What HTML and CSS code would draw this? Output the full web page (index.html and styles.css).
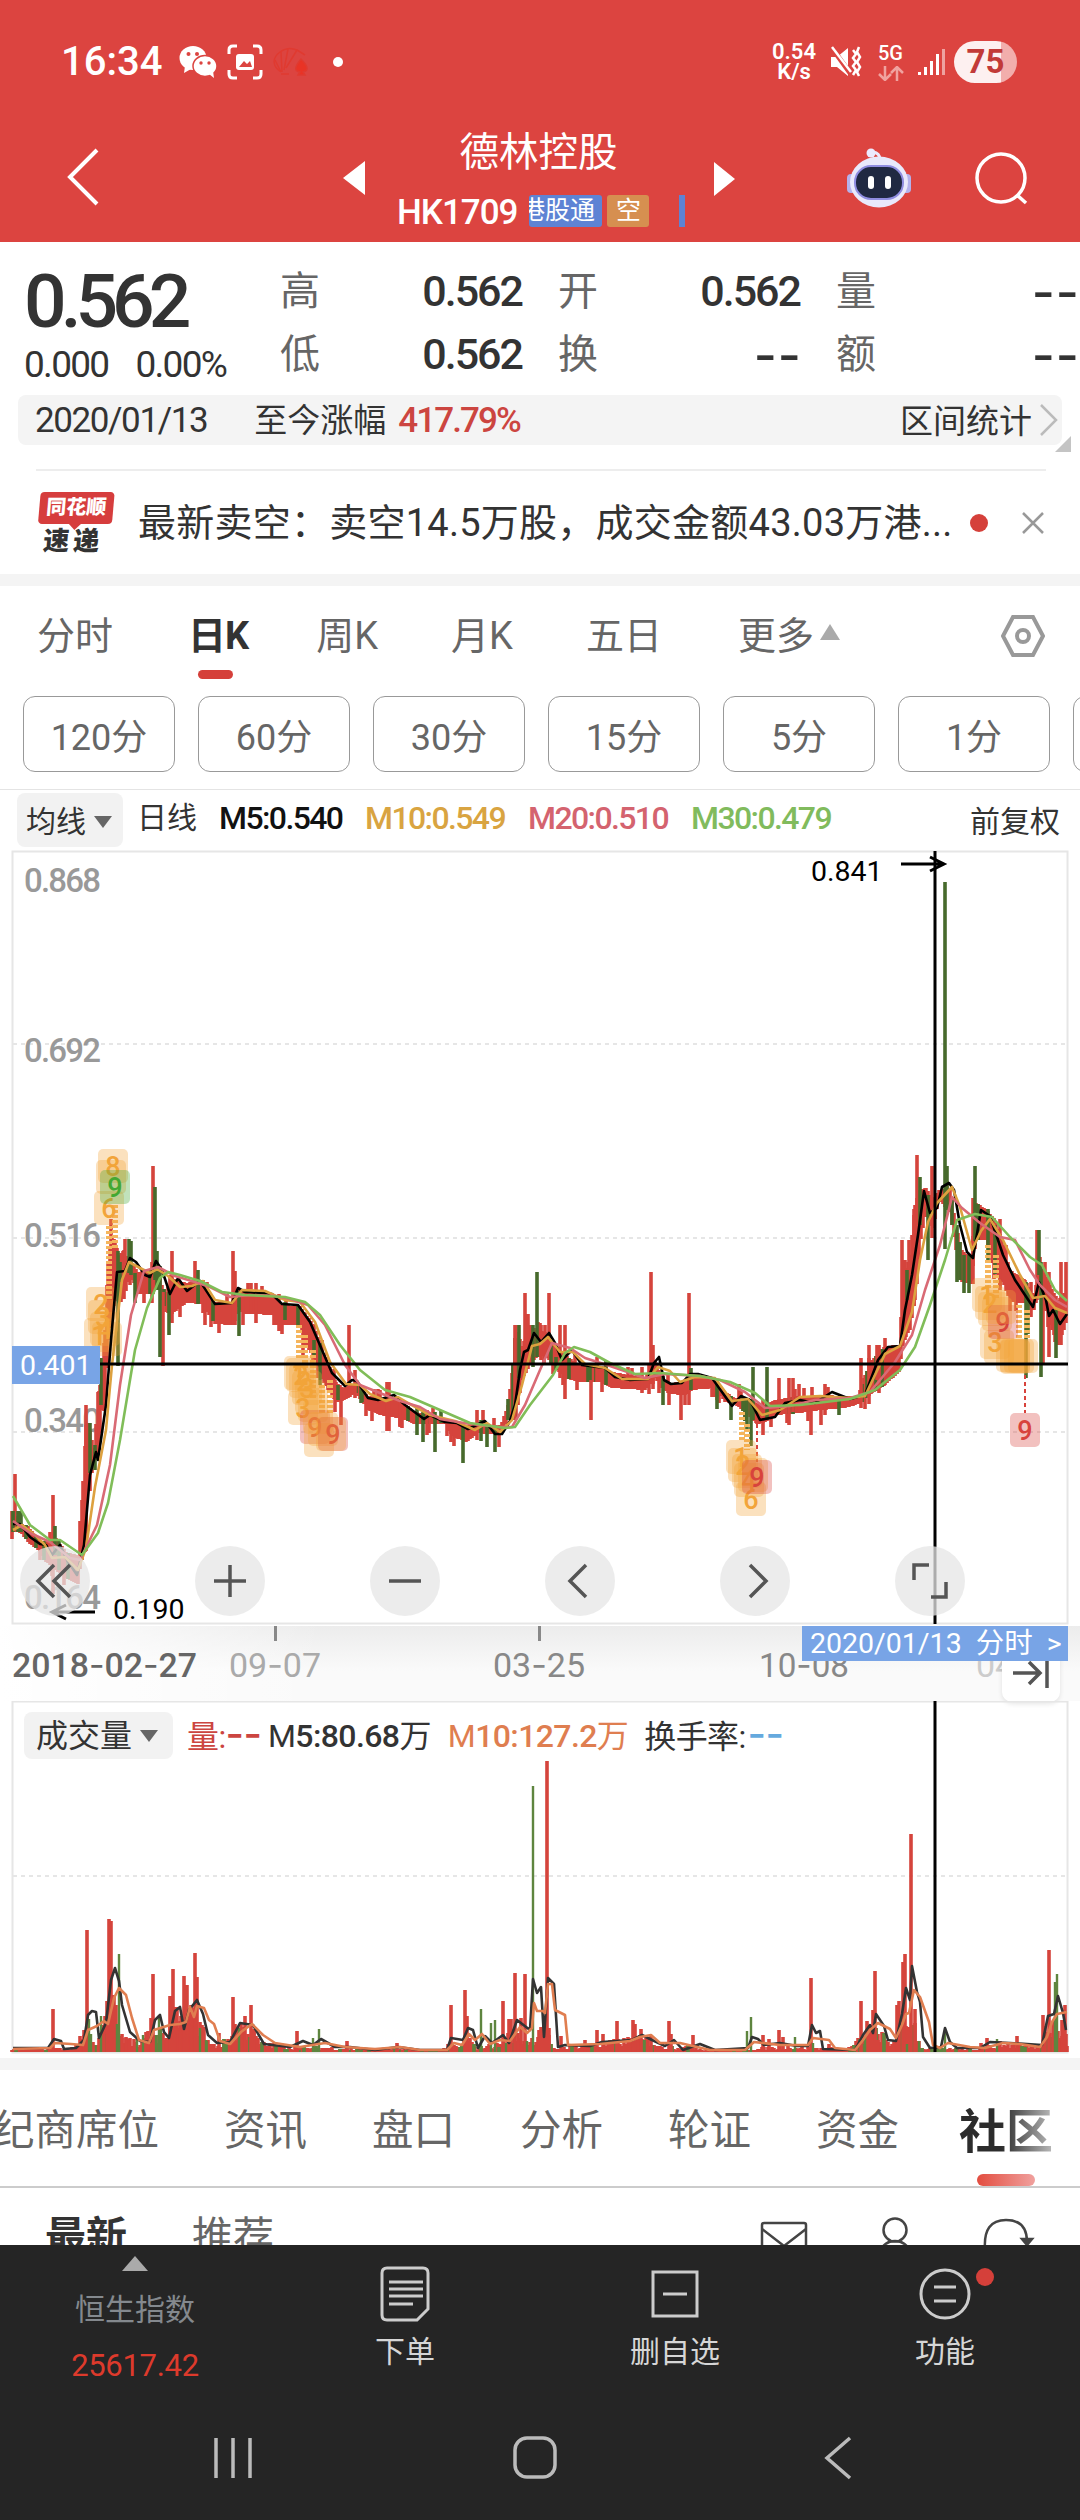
FILE: index.html
```html
<!DOCTYPE html>
<html lang="zh-CN">
<head>
    <meta charset="UTF-8">
    <meta name="viewport" content="width=device-width, initial-scale=1.0">
    <title>德林控股 HK1709</title>
    <link rel="stylesheet" href="styles.css">
</head>
<body>
    <header>
        <div class="status">
            <span class="clock">16:34</span>
            <svg class="st-wechat" width="38" height="34" viewBox="0 0 38 34">
                <ellipse cx="14" cy="13" rx="13.5" ry="12" fill="#fff"/>
                <path d="M6 21l-1 7 7-4z" fill="#fff"/>
                <circle cx="9.500" cy="9" r="2" fill="#dc4440"/><circle cx="18" cy="9" r="2" fill="#dc4440"/>
                <ellipse cx="26" cy="21" rx="12" ry="10.500" fill="#fff" stroke="#dc4440" stroke-width="1.500"/>
                <path d="M30 29l5 4-1-7z" fill="#fff"/>
                <circle cx="22" cy="18" r="1.700" fill="#dc4440"/><circle cx="30" cy="18" r="1.700" fill="#dc4440"/>
            </svg>
            <svg class="st-scan" width="36" height="36" viewBox="0 0 36 36" fill="none" stroke="#fff" stroke-width="3">
                <path d="M2 10V6q0-4 4-4h4M26 2h4q4 0 4 4v4M34 26v4q0 4-4 4h-4M10 34H6q-4 0-4-4v-4"/>
                <rect x="9" y="10" width="18" height="16" rx="3" fill="#fff" stroke="none"/>
                <path d="M12 23l5-6 3 3 3-3 2 6z" fill="#dc4440" stroke="none"/>
            </svg>
            <svg class="st-app" width="36" height="32" viewBox="0 0 36 32" fill="none" stroke="#e03a30" stroke-width="1.500">
                <path d="M8 26C-1 20-1 12 7 6q8-6 17-2l8 5M8 26L2 14M9 26l-1-20M11 24l4-21M13 22L24 4M8 28h8"/>
                <path d="M28 13q11 11 2 13l2 3h-7l2-3q-9-1 1-13z" fill="#e93325"/>
            </svg>
            <i class="st-dot"></i>
            <span class="speed">0.54<br>K/s</span>
            <svg class="st-mute" width="32" height="32" viewBox="0 0 32 32" fill="none" stroke="#fff">
                <path d="M1 11h6l11-9v28L7 21H1z" fill="#fff" stroke="none"/>
                <path d="M2 2l18 25" stroke="#dc4440" stroke-width="5"/><path d="M2 1l19 25" stroke-width="2.500"/>
                <path d="M23 4l3 4-3 4 3 4-3 4 3 4-3 5M29 1l-2 5 3 5-3 5 3 5-3 5 2 4" stroke-width="2.500"/>
            </svg>
            <span class="net">5G<svg width="26" height="15" viewBox="0 0 26 15" fill="none" stroke="#f0a29f" stroke-width="2.500"><path d="M7 0v13M1 8l6 6 6-6M19 15V2M13 7l6-6 6 6"/></svg></span>
            <svg class="st-signal" width="28" height="28" viewBox="0 0 28 28" fill="#fff">
                <path d="M0 24h3v3H0zM6 19h3v8H6zM12 13h3v14h-3zM18 6h3v21h-3z"/><path d="M24 1h3v26h-3z" opacity=".5"/>
            </svg>
            <span class="battery">75</span>
        </div>
        <div class="title-row">
            <svg class="back" width="34" height="58" viewBox="0 0 34 58"><path d="M31 2L4 29l27 27" fill="none" stroke="#fff" stroke-width="4"/></svg>
            <svg class="prev" width="22" height="34" viewBox="0 0 22 34"><path d="M22 0v34L0 17z" fill="#fff"/></svg>
            <div class="stock">
                <h1>德林控股</h1>
                <div class="code">
                    <b>HK1709</b>
                    <span class="tag blue"><span>港股通</span></span>
                    <span class="tag orange">空</span>
                    <i class="sliver"></i>
                </div>
            </div>
            <svg class="next" width="21" height="34" viewBox="0 0 21 34"><path d="M0 0v34l21-17z" fill="#fff"/></svg>
            <svg class="robot" width="66" height="60" viewBox="0 0 66 60">
                <path d="M34 12Q34 5 27 4" fill="none" stroke="#eceaff" stroke-width="3"/><circle cx="25" cy="5" r="4.500" fill="#eceaff"/>
                <rect x="1" y="26" width="9" height="19" rx="4" fill="#b4b2ec"/><rect x="56" y="26" width="9" height="19" rx="4" fill="#b4b2ec"/>
                <ellipse cx="33" cy="34" rx="29" ry="25.500" fill="#e9e9fb"/>
                <rect x="9" y="18" width="48" height="33" rx="16" fill="#202942" stroke="#8f8de0" stroke-width="2"/>
                <rect x="22" y="28" width="6" height="13" rx="3" fill="#fff"/><rect x="39" y="28" width="6" height="13" rx="3" fill="#fff"/>
            </svg>
            <svg class="search" width="56" height="56" viewBox="0 0 56 56" fill="none" stroke="#fff" stroke-width="3.500"><circle cx="27" cy="27" r="24"/><path d="M43 44l9 8"/></svg>
        </div>
    </header>

    <section class="quote">
        <div class="price">
            <strong>0.562</strong>
            <p><span>0.000</span><span>0.00%</span></p>
        </div>
        <dl>
            <div><dt>高</dt><dd>0.562</dd></div>
            <div><dt>开</dt><dd>0.562</dd></div>
            <div><dt>量</dt><dd class="dash">--</dd></div>
            <div><dt>低</dt><dd>0.562</dd></div>
            <div><dt>换</dt><dd class="dash">--</dd></div>
            <div><dt>额</dt><dd class="dash">--</dd></div>
        </dl>
    </section>
    <div class="range">
        <span class="num">2020/01/13</span>
        <span class="since">至今涨幅</span>
        <b>417.79%</b>
        <span class="stat">区间统计</span>
        <svg width="20" height="34" viewBox="0 0 20 34"><path d="M2 2l15 15L2 32" fill="none" stroke="#bbb" stroke-width="2.500"/></svg>
        <i class="corner"></i>
    </div>

    <div class="news">
        <div class="news-logo"><span>同花顺</span><em>速递</em></div>
        <p>最新卖空：卖空14.5万股，成交金额43.03万港...</p>
        <i class="red-dot"></i>
        <svg width="22" height="22" viewBox="0 0 22 22"><path d="M1 1l20 20M21 1L1 21" stroke="#999" stroke-width="2.500"/></svg>
    </div>

    <nav class="periods">
        <a>分时</a><a class="on">日K</a><a>周K</a><a>月K</a><a>五日</a><a class="more">更多</a>
        <svg width="44" height="42" viewBox="0 0 44 42" fill="none" stroke="#999" stroke-width="4"><path d="M12 2h20l10 19-10 19H12L2 21z"/><circle cx="22" cy="21" r="6"/></svg>
    </nav>
    <div class="minutes">
        <span>120分</span><span>60分</span><span>30分</span><span>15分</span><span>5分</span><span>1分</span><span></span>
    </div>

    <div class="ma">
        <span class="pick">均线</span>
        <span class="day">日线</span>
        <b>M5:0.540</b><b class="m10">M10:0.549</b><b class="m20">M20:0.510</b><b class="m30">M30:0.479</b>
        <span class="adjust">前复权</span>
    </div>

    <div class="kline">
        <svg id="kline" width="1080" height="776" viewBox="0 850 1080 776">
            <g class="grid">
                <path d="M13 1044H1068M13 1238H1068M13 1432H1068" stroke-dasharray="4 4"/>
                <rect x="12.500" y="851.500" width="1055" height="772"/>
            </g>
            <g class="axis">
                <text x="24" y="892" textLength="77">0.868</text>
                <text x="24" y="1062" textLength="77">0.692</text>
                <text x="24" y="1247" textLength="77">0.516</text>
                <text x="24" y="1432" textLength="77">0.340</text>
                <text x="24" y="1609" textLength="77">0.164</text>
            </g>
            <g id="candles"></g>
            <g id="badges"></g>
            <g id="averages"></g>
            <path class="cross" d="M12 1364H1068M935 851V1624"/>
            <rect x="12" y="1346" width="88" height="38" fill="#78a4e6"/>
            <text class="mark" x="20" y="1375" fill="#fff">0.401</text>
            <text class="mark" x="811" y="881">0.841</text>
            <text class="mark" x="113" y="1619">0.190</text>
            <path class="arrow" d="M901 864H944M930 857l14 7-14 7M95 1612H52M66 1605l-14 7 14 7"/>
        </svg>
        <div class="tools">
            <button><svg viewBox="0 0 70 70"><path d="M34 19L18 35l16 16M50 19L34 35l16 16"/></svg></button>
            <button><svg viewBox="0 0 70 70"><path d="M19 35h32M35 19v32"/></svg></button>
            <button><svg viewBox="0 0 70 70"><path d="M19 35h32"/></svg></button>
            <button><svg viewBox="0 0 70 70"><path d="M41 19L25 35l16 16"/></svg></button>
            <button><svg viewBox="0 0 70 70"><path d="M30 19l16 16-16 16"/></svg></button>
            <button><svg viewBox="0 0 70 70"><path d="M19 34V19h15M51 36v15H36"/></svg></button>
        </div>
    </div>

    <div class="dates">
        <svg width="1080" height="75" viewBox="0 0 1080 75">
            <path d="M275.500 0v15M539.500 0v15M803.500 0v15" stroke="#888" stroke-width="3"/>
            <g class="axis">
                <text class="first" x="12" y="51" textLength="185" lengthAdjust="spacingAndGlyphs">2018<tspan class="dash">-</tspan>02<tspan class="dash">-</tspan>27</text>
                <text x="229" y="51" textLength="92" lengthAdjust="spacingAndGlyphs" fill="#aaa">09<tspan class="dash">-</tspan>07</text>
                <text x="493" y="51" textLength="92" lengthAdjust="spacingAndGlyphs">03<tspan class="dash">-</tspan>25</text>
                <text x="759" y="51" textLength="90" lengthAdjust="spacingAndGlyphs">10<tspan class="dash">-</tspan>08</text>
                <text class="faint" x="976" y="51">04</text>
            </g>
        </svg>
        <span class="end"><svg width="38" height="30" viewBox="0 0 38 30" fill="none" stroke="#555" stroke-width="3.500"><path d="M0 15h26M16 4l11 11-11 11M34 0v30"/></svg></span>
        <span class="cursor-date">2020/01/13<span>分时</span><span>&gt;</span></span>
    </div>

    <div class="volume">
        <svg id="volume" width="1080" height="357" viewBox="0 1701 1080 357">
            <g class="grid">
                <path d="M13 1876H1068" stroke-dasharray="4 4"/>
                <rect x="12.500" y="1701.500" width="1055" height="351"/>
            </g>
            <g id="volumeBars"></g>
            <g id="volumeLines"></g>
            <path class="cross" d="M935 1701V2052"/>
        </svg>
        <div class="vol-head">
            <span class="pick">成交量</span>
            <span class="v-red">量:<i class="dash">--</i></span>
            <span>M<b>5:80.68</b>万</span>
            <span class="v-orange">M<b>10:127.2</b>万</span>
            <span class="turn">换手率:<i class="dash">--</i></span>
        </div>
    </div>

    <nav class="sections">
        <a>经纪商席位</a><a>资讯</a><a>盘口</a><a>分析</a><a>轮证</a><a>资金</a><a class="on">社区</a>
    </nav>
    <div class="feed">
        <b>最新</b><span>推荐</span>
        <svg width="310" height="40" viewBox="0 0 310 40" fill="none" stroke="#444" stroke-width="2.500">
            <rect x="2" y="6" width="44" height="34" rx="2"/><path d="M2 12l22 17 22-17"/>
            <circle cx="135" cy="13" r="11.500"/><path d="M118 40q4-16 17-16t17 16"/>
            <path d="M225 32q-2-29 21-29 21 0 21 22"/><path d="M262 22h10l-5 6z" fill="#444"/>
        </svg>
    </div>

    <footer>
        <div class="actions">
            <div class="index"><i></i><span>恒生指数</span><b>25617.42</b></div>
            <div>
                <svg width="50" height="56" viewBox="0 0 50 56"><path d="M7 2h36q5 0 5 5v36L37 54H7q-5 0-5-5V7q0-5 5-5zM9 16h34M9 23h34M9 30h34M9 38h24"/></svg>
                <span>下单</span>
            </div>
            <div>
                <svg width="50" height="56" viewBox="0 0 50 56"><path d="M3 6h44v44H3zM13 28h24"/></svg>
                <span>删自选</span>
            </div>
            <div class="fn">
                <svg width="52" height="56" viewBox="0 0 52 56"><circle cx="26" cy="28" r="24"/><path d="M15 21h22M15 35h22"/></svg>
                <span>功能</span>
            </div>
        </div>
        <svg class="sysnav" width="1080" height="60" viewBox="0 0 1080 60" fill="none" stroke="#bbb" stroke-width="3.500">
            <path d="M216 10v40M233 10v40M250 10v40"/>
            <rect x="515" y="10" width="40" height="39" rx="12"/>
            <path d="M850 10l-23 20 23 20"/>
        </svg>
    </footer>
    <script src="chart.js"></script>
</body>
</html>
```

FILE: styles.css
```css
* {
    box-sizing: border-box;
}

body {
    margin: 0;
    width: 1080px;
    height: 2520px;
    overflow: hidden;
    background: #fff;
    color: #333;
    font-family: Roboto, "Noto Sans CJK SC", sans-serif;
    font-size: 38px;
    line-height: 1;
}

svg {
    display: block;
    flex: none;
}

h1, p, dl, dd {
    margin: 0;
}

i, em {
    font-style: normal;
}

a, span, b, dt, dd {
    white-space: nowrap;
}

.dash {
    font-family: Inter, sans-serif;
    font-weight: 500;
}

/* cabeçalho */
header {
    height: 242px;
    background: #dc4440;
    color: #fff;
}

.status {
    display: flex;
    align-items: center;
    height: 123px;
    padding-left: 61px;
}

.clock {
    width: 118px;
    font-size: 40px;
    font-weight: 500;
}

.st-scan {
    margin-left: 10px;
}

.st-app {
    margin-left: 10px;
}

.st-dot {
    width: 10px;
    height: 10px;
    margin-left: 24px;
    border-radius: 50%;
    background: #fff;
}

.speed {
    width: 46px;
    margin-left: 428px;
    font-size: 22px;
    font-weight: 600;
    line-height: 20px;
    text-align: center;
}

.st-mute {
    margin-left: 13px;
}

.net {
    width: 26px;
    margin-left: 16px;
    font-size: 20px;
    font-weight: 500;
}

.net svg {
    margin-top: 3px;
}

.st-signal {
    margin-left: 14px;
}

.battery {
    width: 63px;
    height: 42px;
    margin-left: 8px;
    border-radius: 21px;
    background: linear-gradient(90deg, #fdf0f0 75%, #f2aeac 75%);
    color: #c23a38;
    font-size: 33px;
    font-weight: 700;
    line-height: 42px;
    text-align: center;
}

.title-row {
    display: flex;
    height: 119px;
    padding-left: 66px;
}

.back {
    margin-top: 25px;
}

.prev {
    margin: 38px 0 0 243px;
}

.stock {
    width: 349px;
    padding: 8px 0 0 32px;
}

h1 {
    width: 283px;
    font-size: 39.500px;
    font-weight: 400;
    text-align: center;
    line-height: 44px;
}

.code {
    display: flex;
    align-items: center;
    height: 32px;
    margin-top: 20px;
}

.code b {
    width: 132px;
    padding-top: 2px;
    font-size: 35px;
    font-weight: 500;
    letter-spacing: -1px;
}

.tag {
    display: flex;
    justify-content: flex-end;
    height: 32px;
    overflow: hidden;
    border-radius: 3px;
    font-size: 25px;
    line-height: 31px;
}

.tag.blue {
    width: 73px;
    padding-right: 7px;
    background: #5e83d4;
}

.tag.orange {
    width: 42px;
    margin-left: 5px;
    padding-right: 8px;
    background: #d68f50;
}

.sliver {
    width: 6px;
    height: 32px;
    margin-left: 30px;
    background: #5e83d4;
}

.next {
    margin-top: 39px;
}

.robot {
    margin: 25px 0 0 111px;
}

.search {
    margin: 28px 0 0 62px;
}

/* cotação */
.quote {
    display: flex;
    height: 153px;
    padding-left: 24px;
}

.price {
    width: 256px;
    padding-top: 20px;
}

.price strong {
    display: block;
    height: 79px;
    font-size: 75px;
    font-weight: 500;
    letter-spacing: -6px;
    line-height: 79px;
}

.price p {
    display: flex;
    gap: 27px;
    margin-top: 5px;
    font-size: 37px;
    letter-spacing: -1.700px;
}

.quote dl {
    display: grid;
    grid-template-columns: 242px 242px 242px;
    grid-template-rows: 63px 63px;
    column-gap: 36px;
    padding-top: 18px;
}

.quote dl div {
    display: flex;
    justify-content: space-between;
    align-items: center;
}

.quote dt {
    color: #666;
    font-size: 40px;
}

.quote dd {
    font-size: 43px;
    font-weight: 500;
    letter-spacing: -2px;
}

.quote dd.dash {
    font-size: 50px;
    letter-spacing: 1px;
    margin-right: -2px;
}

.range {
    position: relative;
    display: flex;
    align-items: center;
    height: 50px;
    margin: 0 18px;
    padding: 0 3px 0 17px;
    border-radius: 8px;
    background: #f4f4f4;
    font-size: 33px;
}

.num {
    font-size: 35px;
    letter-spacing: -1.400px;
}

.since {
    margin-left: 47px;
}

.range b {
    margin-left: 12px;
    color: #cc4540;
    font-size: 35px;
    font-weight: 500;
    letter-spacing: -1.900px;
}

.stat {
    margin: 3px 7px 0 auto;
}

.corner {
    position: absolute;
    right: -9px;
    bottom: -7px;
    border: 8px solid transparent;
    border-right-color: #c4c4c4;
    border-bottom-color: #c4c4c4;
}

.news {
    display: flex;
    align-items: center;
    height: 105px;
    margin: 24px 34px 0 36px;
    border-top: 2px solid #ededed;
}

.news-logo {
    position: relative;
    width: 74px;
    margin: 0 26px 0 2px;
    transform: skewX(-5deg);
}

.news-logo span {
    display: block;
    height: 32px;
    border-radius: 4px;
    background: #d63d3d;
    color: #fff;
    font-size: 20px;
    font-weight: 900;
    line-height: 31px;
    text-align: center;
}

.news-logo::after {
    content: "";
    position: absolute;
    left: 31px;
    top: 32px;
    border: 6px solid transparent;
    border-bottom: 0;
    border-top-color: #d63d3d;
}

.news-logo em {
    display: block;
    margin-top: 4px;
    font-size: 26px;
    font-weight: 900;
    letter-spacing: 4px;
    text-align: center;
}

.news p {
    width: 832px;
    font-size: 38px;
    letter-spacing: .25px;
}

.red-dot {
    width: 18px;
    height: 18px;
    margin-right: 34px;
    border-radius: 50%;
    background: #d5403a;
}

/* períodos */
.periods {
    display: flex;
    align-items: center;
    height: 122px;
    border-top: 12px solid #f4f4f4;
    padding: 0 35px 10px 37px;
    color: #666;
}

.periods a {
    position: relative;
}

.periods a:nth-child(2) { margin-left: 75px; }
.periods a:nth-child(3) { margin-left: 68px; }
.periods a:nth-child(4) { margin-left: 73px; }
.periods a:nth-child(5) { margin-left: 73px; }
.periods a:nth-child(6) { margin-left: 76px; }

.periods svg {
    margin-left: auto;
}

.periods .on {
    color: #333;
    font-weight: 700;
    letter-spacing: -1px;
}

.periods .on::after {
    content: "";
    position: absolute;
    left: 10px;
    top: 53px;
    width: 35px;
    height: 9px;
    border-radius: 5px;
    background: #d5403a;
}

.more::after {
    content: "";
    display: inline-block;
    margin: 0 0 9px 6px;
    border: 10px solid transparent;
    border-top: 0;
    border-bottom: 16px solid #aaa;
}

.minutes {
    display: flex;
    gap: 23px;
    height: 94px;
    padding-left: 23px;
    overflow: hidden;
    border-bottom: 1px solid #e4e4e4;
}

.minutes span {
    flex: none;
    width: 152px;
    height: 76px;
    border: 1.500px solid #999;
    border-radius: 12px;
    color: #666;
    font-size: 36px;
    line-height: 82px;
    text-align: center;
}

.ma {
    display: flex;
    align-items: center;
    height: 60px;
    padding: 0 20px 0 17px;
    font-size: 30px;
}

.pick {
    display: flex;
    align-items: center;
    background: #f2f2f2;
    border-radius: 8px;
}

.pick::after {
    content: "";
    border: 9px solid transparent;
    border-bottom: 0;
    border-top: 12px solid #666;
    margin-left: 8px;
}

.ma .pick {
    width: 106px;
    height: 54px;
    padding: 4px 0 0 9px;
    font-size: 30px;
}

.day {
    width: 82px;
    margin: -5px 0 0 14px;
    font-size: 30px;
}

.ma b {
    margin: -5px 0 0;
    width: 146px;
    color: #111;
    font-size: 32px;
    font-weight: 500;
    letter-spacing: -1.600px;
}

.ma b.m10 { width: 163px; color: #d9a441; }
.ma b.m20 { width: 163px; color: #d4636f; }
.ma b.m30 { color: #81bb5d; }

.adjust {
    margin: 4px 0 0 auto;
}

/* gráfico */
.kline {
    position: relative;
    height: 776px;
}

.grid {
    fill: none;
    stroke: #e6e6e6;
    stroke-width: 2;
}

.axis {
    font-size: 33px;
    font-weight: 500;
    fill: #999;
}

.mark {
    font-size: 28.500px;
}

.cross, .arrow {
    fill: none;
    stroke: #000;
    stroke-width: 3;
}

.red { stroke: #d5443c; }
.green { stroke: #476a2c; }

.bars {
    fill: none;
    stroke-width: 3.600;
}

.line {
    fill: none;
    stroke-width: 2.600;
    stroke-linejoin: round;
}

.tools {
    position: absolute;
    left: 20px;
    bottom: 10px;
    display: flex;
    gap: 105px;
}

.tools button {
    width: 70px;
    height: 70px;
    padding: 0;
    border: 0;
    border-radius: 50%;
    background: rgba(230, 230, 230, .75);
}

.tools path {
    fill: none;
    stroke: #555;
    stroke-width: 3.500;
}

.dates {
    position: relative;
    height: 75px;
    background: linear-gradient(90deg, #fff, rgba(255, 255, 255, 0) 30%), linear-gradient(#ececec, #fafafa 60%);
}

.dates .axis {
    fill: #888;
    font-size: 34px;
    font-weight: 400;
}

.dates .dash {
    font-weight: 400;
}

.dates .first {
    fill: #666;
    font-weight: 500;
}

.dates .faint {
    fill: #ccc;
}

.cursor-date {
    position: absolute;
    right: 12px;
    top: 0;
    display: flex;
    gap: 14px;
    width: 266px;
    height: 35px;
    padding-left: 8px;
    background: #78a4e6;
    color: #fff;
    font-size: 28.500px;
    line-height: 36px;
}

.end {
    position: absolute;
    right: 20px;
    bottom: -1px;
    width: 58px;
    height: 60px;
    padding: 16px 0 0 11px;
    border-radius: 10px;
    background: #fff;
    box-shadow: 0 2px 5px rgba(0, 0, 0, .1);
}

.volume {
    position: relative;
    height: 357px;
}

.volume > svg {
    position: absolute;
    left: 0;
    top: 0;
}

.vol-head {
    position: relative;
    display: flex;
    align-items: center;
    padding: 11px 0 0 24px;
    font-size: 32px;
    letter-spacing: -.6px;
}

.vol-head .pick {
    width: 149px;
    height: 47px;
    padding-left: 12px;
    margin-right: 14px;
    letter-spacing: 0;
}

.vol-head b {
    font-weight: 500;
}

.vol-head .dash {
    font-size: 40px;
    line-height: 32px;
}

.v-red {
    width: 81px;
    color: #cc4540;
}

.v-orange {
    margin: 0 16px 0 17px;
    color: #df7e50;
}

.turn .dash {
    color: #65a9de;
    margin-left: 2px;
}

/* seções */
.sections {
    position: relative;
    display: flex;
    justify-content: flex-end;
    align-items: center;
    height: 130px;
    padding: 6px 27px 0 0;
    gap: 65px;
    border-top: 12px solid #f4f4f4;
    border-bottom: 2px solid #ccc;
    color: #666;
    font-size: 41.500px;
}

.sections .on {
    margin-left: -5px;
    color: transparent;
    background: linear-gradient(90deg, #2c2c2c 45%, #bbb);
    background-clip: text;
    font-size: 47px;
    font-weight: 700;
}

.sections::after {
    content: "";
    position: absolute;
    right: 45px;
    bottom: 0;
    width: 58px;
    height: 12px;
    border-radius: 6px;
    background: linear-gradient(90deg, #e34d40, #f0a19e);
}

.feed {
    display: flex;
    height: 57px;
    padding: 29px 45px 0 45px;
    overflow: hidden;
    font-size: 41px;
}

.feed span {
    margin-left: 65px;
    color: #666;
}

.feed svg {
    margin: 0 -35px 0 auto;
}

footer {
    position: relative;
    height: 275px;
    background: #252525;
    color: #d6d6d6;
}

.actions {
    display: grid;
    grid-template-columns: repeat(4, 270px);
    height: 183px;
}

.actions div {
    position: relative;
    display: flex;
    flex-direction: column;
    align-items: center;
    padding-top: 21px;
    font-size: 30px;
}

.actions path, .actions circle {
    fill: none;
    stroke: #ccc;
    stroke-width: 3;
}

.actions svg + span {
    margin-top: 15px;
}

.actions .index {
    padding-top: 11px;
}

.index i {
    border: 13px solid transparent;
    border-top: 0;
    border-bottom: 15px solid #aaa;
}

.index span {
    margin-top: 24px;
    color: #84898e;
}

.index b {
    margin-top: 25px;
    color: #dd3a2c;
    font-size: 31px;
    font-weight: 400;
    letter-spacing: -.3px;
}

.fn::after {
    content: "";
    position: absolute;
    left: 166px;
    top: 23px;
    width: 18px;
    height: 18px;
    border-radius: 50%;
    background: #d5403a;
}
```

FILE: chart.js
```js
const SVG = "http://www.w3.org/2000/svg";

function add(parent, tag, attrs, text) {
    const el = document.createElementNS(SVG, tag);
    for (const k in attrs) el.setAttribute(k, attrs[k]);
    if (text) el.textContent = text;
    document.getElementById(parent).appendChild(el);
}

let seed = 7;
function rnd() {
    seed = (seed * 16807) % 2147483647;
    return seed / 2147483647;
}

function parse(s) {
    return s.trim().split(/\s+/).map(p => p.split(",").map(Number));
}

// x,top,bottom of the dense candle area
const band = parse(`12,1511,1530 22,1524,1534 28,1526,1542 40,1541,1551 44,1541,1560 56,1538,1570 66,1552,1578 78,1555,1584
80,1521,1569 83,1489,1555 86,1425,1551 88,1423,1490 94,1448,1465 98,1400,1455 102,1370,1410 105,1330,1398 108,1262,1340 112,1235,1316 115,1241,1301
119,1255,1295 124,1250,1290 128,1262,1273 134,1266,1283 138,1272,1294 153,1270,1294 158,1268,1280 162,1285,1300 166,1292,1312 172,1278,1314 186,1283,1303
203,1280,1304 207,1290,1312 215,1302,1324 233,1302,1325 236,1290,1305 244,1290,1314 258,1293,1314 277,1297,1316 280,1305,1325 300,1306,1325
305,1313,1345 314,1325,1357 320,1343,1375 328,1362,1390 336,1382,1402 344,1388,1400 356,1383,1393 368,1396,1410 384,1398,1416 400,1400,1418 415,1412,1424
445,1418,1424 452,1423,1436 466,1425,1442 478,1424,1433 500,1427,1435 508,1405,1420 513,1365,1420 516,1325,1418 522,1346,1380 530,1325,1365 536,1330,1358
545,1332,1355 555,1345,1368 565,1355,1378 580,1366,1382 600,1366,1382 612,1372,1388 645,1378,1390 655,1360,1378 662,1378,1388 670,1384,1394 685,1380,1395 692,1376,1390
715,1380,1388 725,1392,1402 735,1398,1404 748,1398,1415 757,1404,1424 765,1405,1422 775,1400,1415 800,1396,1413 820,1395,1410 845,1396,1408 858,1396,1404 865,1375,1400
872,1360,1393 885,1346,1385 899,1345,1372 904,1275,1340 910,1255,1330 915,1205,1300 919,1190,1250 926,1188,1212 933,1200,1228 939,1190,1200 950,1188,1212 956,1225,1250
962,1250,1282 971,1258,1284 976,1203,1240 986,1209,1240 994,1218,1270 1004,1245,1285 1010,1270,1302 1025,1280,1303 1034,1295,1310 1040,1265,1290 1050,1285,1325 1058,1300,1345 1066,1290,1325`);

const redSpikes = parse(`15,1474,1530 53,1495,1594 86,1405,1540 99,1391,1450 111,1219,1316 125,1239,1283 153,1166,1294 163,1292,1366 172,1251,1314 195,1261,1303 205,1284,1325
233,1251,1325 235,1271,1325 243,1290,1325 251,1283,1314 256,1283,1314 303,1313,1357 335,1380,1412 341,1390,1425 349,1325,1393 355,1370,1398 387,1382,1431 389,1382,1431 400,1400,1426 427,1410,1435 451,1423,1442 477,1410,1440 483,1410,1430
499,1425,1447 515,1325,1420 525,1293,1370 528,1314,1360 541,1325,1360 545,1325,1346 549,1293,1346 560,1325,1378 565,1325,1399 591,1380,1420 597,1357,1382 651,1272,1384 653,1345,1384 669,1384,1405 681,1390,1420 685,1390,1405 689,1293,1405
642,1367,1393 739,1384,1405 763,1400,1435 779,1378,1415 789,1378,1425 793,1378,1412 799,1384,1412 811,1400,1435 821,1400,1425 825,1384,1415 861,1358,1408 869,1345,1404 877,1345,1380 879,1345,1393 902,1240,1344 905,1260,1340 909,1240,1320 914,1209,1306 917,1155,1274
932,1166,1238 973,1198,1284 1000,1219,1290 1037,1230,1300 1043,1290,1365 1045,1262,1310 1049,1272,1357 1055,1300,1342 1061,1262,1345 1066,1262,1323`);

const greenSpikes = parse(`13,1511,1532 18,1511,1532 21,1511,1532 55,1526,1555 59,1541,1570 90,1423,1473 95,1445,1470 101,1358,1405 118,1251,1366 120,1262,1282 129,1239,1273 131,1241,1275 135,1273,1303 155,1187,1280 157,1251,1290 160,1266,1357 169,1292,1335 198,1270,1303 239,1291,1336
285,1302,1320 314,1340,1357 320,1343,1385 338,1385,1400 361,1385,1403 417,1407,1435 423,1412,1442 435,1412,1452 441,1410,1423 463,1425,1463 481,1420,1441 487,1425,1447 495,1425,1452 508,1399,1420 519,1325,1378 533,1325,1367 537,1272,1357 551,1346,1365 556,1357,1370 663,1376,1405 691,1368,1390
717,1379,1409 731,1396,1420 747,1400,1431 751,1400,1446 753,1367,1420 767,1367,1420 839,1396,1415 907,1270,1300 920,1177,1225 928,1195,1260 945,882,1249 947,1166,1210 957,1225,1282 964,1255,1293 969,1255,1293 975,1166,1241 988,1209,1260 995,1225,1274 1026,1282,1378 1028,1290,1334 1039,1230,1275 1041,1262,1377 1056,1310,1358`);

function bars(list) {
    return list.map(([x, a, b]) => `M${x} ${a}V${b}`).join("");
}

const dense = [];
for (let i = 0; i < band.length - 1; i++) {
    const [x0, a0, b0] = band[i], [x1, a1, b1] = band[i + 1];
    for (let x = x0; x < x1; x += 2) {
        const t = (x - x0) / (x1 - x0);
        const top = a0 + (a1 - a0) * t - (rnd() > .93 ? 8 : 0);
        const low = b0 + (b1 - b0) * t + (rnd() > .87 ? 9 : 0);
        dense.push([x, Math.round(top), Math.round(low)]);
    }
}
add("candles", "path", {class: "bars red", d: bars(dense)});
add("candles", "path", {class: "bars green", d: bars(dense.filter(() => rnd() > .95))});
add("candles", "path", {class: "bars red", d: bars(redSpikes)});
add("candles", "path", {class: "bars green", d: bars(greenSpikes)});

const averages = {
    "#000": `13,1524 20,1524 30,1537 40,1544 46,1545 52,1555 60,1545 67,1560 77,1575 84,1545 90,1475 96,1452 98,1460 106,1405 111,1340 117,1272 125,1271 130,1258 136,1262 145,1275 150,1277 156,1261 162,1270 170,1294 178,1278 187,1291 200,1281 215,1304 232,1303 238,1288 245,1292 262,1293 272,1294 282,1304 298,1305 310,1322 322,1350 332,1373 345,1386 352,1380 357,1381 368,1398 378,1400 394,1395 405,1405 424,1419 430,1415 445,1422 457,1423 468,1429 485,1421 495,1434 502,1434 510,1421 515,1405 520,1370 524,1352 528,1350 534,1333 541,1342 549,1333 555,1343 562,1360 572,1350 582,1365 605,1368 615,1377 630,1380 648,1379 654,1363 659,1357 664,1380 671,1384 682,1383 690,1374 698,1374 712,1378 722,1392 732,1406 741,1396 750,1400 760,1420 775,1417 785,1403 800,1400 815,1403 832,1392 850,1399 865,1395 878,1360 888,1347 900,1346 905,1310 912,1275 918,1235 924,1191 930,1213 937,1208 942,1187 949,1183 954,1190 960,1225 967,1252 973,1258 981,1210 990,1216 1003,1255 1015,1280 1025,1295 1033,1307 1039,1282 1046,1300 1049,1316 1053,1310 1060,1324 1067,1314`,
    "#dda13f": `13,1530 22,1525 35,1535 45,1545 52,1558 65,1557 78,1570 86,1548 95,1487 106,1430 112,1365 122,1280 129,1262 140,1268 150,1273 157,1269 168,1276 180,1287 192,1286 203,1281 215,1300 232,1303 242,1290 265,1291 285,1300 300,1302 315,1322 330,1362 346,1384 360,1385 370,1394 386,1401 398,1397 410,1404 430,1415 455,1421 475,1430 487,1423 500,1432 512,1420 522,1385 532,1346 540,1344 548,1337 560,1352 573,1352 585,1364 605,1368 622,1379 648,1379 658,1367 670,1371 680,1382 695,1377 715,1378 732,1401 748,1399 762,1415 780,1410 800,1397 820,1396 850,1398 865,1396 885,1354 900,1346 912,1312 920,1260 928,1222 937,1203 952,1187 960,1207 972,1250 981,1231 990,1219 1003,1240 1020,1275 1033,1298 1045,1296 1055,1308 1067,1313`,
    "#d96a75": `13,1521 30,1533 50,1542 70,1558 80,1560 97,1525 110,1465 120,1385 131,1315 144,1271 158,1267 175,1276 195,1282 210,1287 230,1297 250,1295 275,1296 290,1299 308,1305 325,1325 345,1365 360,1385 380,1393 400,1401 420,1407 440,1419 470,1424 500,1427 512,1427 525,1405 540,1370 552,1343 570,1348 585,1358 610,1366 645,1378 665,1374 700,1376 720,1380 745,1392 765,1408 790,1406 815,1400 850,1398 870,1392 895,1362 912,1335 925,1290 940,1245 952,1197 962,1208 980,1223 1000,1237 1015,1240 1030,1270 1040,1285 1055,1300 1067,1307`,
    "#80bd58": `13,1496 30,1525 50,1540 60,1540 82,1555 98,1533 108,1503 120,1440 135,1350 147,1308 160,1278 168,1272 180,1275 200,1281 222,1292 245,1295 285,1297 305,1302 320,1315 340,1345 360,1370 385,1390 410,1397 440,1410 470,1423 505,1428 515,1427 530,1405 553,1375 565,1353 574,1347 590,1352 610,1363 635,1374 660,1373 700,1376 730,1382 755,1393 770,1406 800,1405 850,1399 875,1390 900,1370 915,1347 930,1305 945,1260 957,1220 975,1214 992,1217 1010,1237 1030,1257 1042,1265 1055,1290 1067,1301`
};
for (const color in averages) {
    add("averages", "polyline", {class: "line", stroke: color, points: averages[color]});
}

// nine-turn markers: x, y, number, colour
const orange = "#f2a43a", red = "#d8433c", green = "#43a832";
const badges = [
    [98, 1149, 8, orange], [96, 1160, 0, orange], [94, 1191, 6, orange], [100, 1170, 9, green],
    [86, 1287, 2, orange], [88, 1300, 3, orange], [84, 1318, 1, orange], [90, 1312, 4, orange], [92, 1322, 0, orange],
    [284, 1356, 1, orange], [286, 1358, 2, orange], [289, 1364, 2, orange], [292, 1371, 3, orange], [288, 1391, 3, orange], [295, 1380, 0, orange], [298, 1388, 0, orange],
    [300, 1410, 9, red], [303, 1400, 0, orange], [308, 1412, 0, orange], [304, 1423, 0, orange], [318, 1417, 9, red], [316, 1417, 0, orange],
    [726, 1440, 1, orange], [728, 1448, 2, orange], [732, 1454, 0, orange], [734, 1463, 4, orange], [738, 1458, 0, orange], [736, 1482, 6, orange], [742, 1460, 9, red],
    [972, 1278, 1, orange], [975, 1286, 2, orange], [978, 1292, 0, orange], [982, 1297, 0, orange], [980, 1325, 3, orange], [984, 1330, 0, orange], [988, 1305, 9, red], [986, 1290, 0, orange],
    [996, 1338, 0, orange], [1000, 1339, 0, orange], [1004, 1339, 0, orange], [1008, 1339, 0, orange], [1000, 1340, 0, orange],
    [1010, 1413, 9, red]
];
add("badges", "path", {d: "M109 1226V1300M115 1205V1250M299 1325V1360M305 1335V1370M313 1350V1400M322 1385V1415M330 1380V1415M742 1412V1440M747 1424V1450M988 1245V1290M996 1255V1300M1019 1305V1340M1027 1310V1340", stroke: "#f5b55c", "stroke-width": 6, "stroke-dasharray": "3 2"});
add("badges", "path", {d: "M757 1424V1462M1025 1375V1413", stroke: red, "stroke-width": 2, "stroke-dasharray": "4 3"});
for (const [x, y, n, color] of badges) {
    add("badges", "rect", {x: x, y: y, width: 30, height: 34, rx: 5, fill: color, opacity: .33});
    if (n) add("badges", "text", {x: x + 15, y: y + 27, fill: color, "font-size": 27, "font-weight": 500, "text-anchor": "middle"}, n);
}

// volume
const volRed = parse(`53,2009 80,2036 84,2030 87,1930 93,2042 107,2001 109,1919 111,1921 114,1995 116,2005 122,2034 126,2037 151,2018 153,1974 163,2033 170,1996 173,1969 175,2007 180,2021 184,1976 187,1985 191,2005 195,1953 197,1977 204,2027 219,2033 233,1997 235,2024 241,2023 245,2016 251,2005 254,2030 297,2031 347,2041 397,2043
451,2005 465,1990 467,2016 503,2001 509,2019 511,2019 515,1973 521,2018 525,1974 539,2030 541,2027 544,2020 547,1761 549,2028 561,2036 585,2040 597,2030 603,2034 617,2021 633,2020 635,2024 641,2029 651,2035 669,2021 671,2034 693,2035 763,2035 769,2039 779,2030 783,2037 811,1978 829,2044
861,2001 867,2021 870,2025 873,2010 875,1971 878,2040 897,2005 899,2001 903,1962 905,1954 908,2027 911,1834 915,2009 981,2043 987,2038 999,2041 1017,2036 1043,2015 1045,2026 1049,1950 1053,2021 1062,2020 1065,2005 1067,2046`);
const volGreen = parse(`89,2019 91,2034 101,2016 117,2024 119,1954 137,2038 143,2035 159,2018 161,2028 200,2028 206,2040 239,2028 313,2038 319,2029 481,2009 491,2023 495,2020 527,2041 533,1786 747,2031 751,2017 795,2037 813,2043 865,2036 907,2044 919,2041 945,2030 997,2039 1055,1982 1057,1974`);
const floor = parse(`12,4 50,4 70,3 80,10 86,22 95,6 103,30 113,45 120,18 140,8 150,22 160,22 168,12 175,45 183,30 190,40 200,28 210,9 220,7 232,20 250,28 260,10 285,6 300,4 320,5 345,4 400,3 440,2 450,8 460,5 468,18 475,5 500,8 510,22 530,12 545,30 552,3 580,8 600,8 630,14 650,14 660,6 690,6 710,1 750,3 790,6 815,4 850,5 860,14 880,22 890,8 900,30 915,30 922,4 940,3 980,4 1000,9 1025,7 1040,8 1046,25 1060,20 1067,15`);
const low = [];
for (let i = 0; i < floor.length - 1; i++) {
    const [x0, h0] = floor[i], [x1, h1] = floor[i + 1];
    for (let x = x0; x < x1; x += 2) {
        const h = h0 + (h1 - h0) * (x - x0) / (x1 - x0);
        low.push([x, Math.round(2052 - h * (.4 + rnd() * .8)), 2052]);
    }
}
const toBase = list => list.map(([x, y]) => [x, y, 2052]);
add("volumeBars", "path", {class: "bars red", d: bars(low)});
add("volumeBars", "path", {class: "bars", stroke: "#5e853f", d: bars(low.filter(() => rnd() > .85))});
add("volumeBars", "path", {class: "bars red", d: bars(toBase(volRed))});
add("volumeBars", "path", {d: bars(toBase(volGreen)), stroke: "#5e853f", "stroke-width": 2.4});

add("volumeLines", "polyline", {class: "line", stroke: "#333", points: `13,2048 48,2048 54,2039 61,2041 64,2049 76,2048 84,2040 88,2015 92,2011 96,2012 99,2038 106,2023 111,1980 115,1968 119,1981 122,2005 130,2032 140,2041 150,2042 155,2020 160,2015 164,2032 169,2038 175,2011 180,2007 184,2029 189,2010 197,2000 203,2014 208,2035 217,2043 230,2042 240,2023 253,2025 264,2044 290,2047 303,2041 313,2045 321,2039 335,2047 350,2047 375,2050 398,2047 420,2050 447,2050 451,2038 463,2040 468,2028 473,2030 478,2048 485,2036 492,2043 503,2035 509,2043 517,2020 530,2030 533,1979 537,1993 541,1987 544,2037 548,1978 554,1984 558,2047 565,2045 590,2046 602,2042 632,2040 642,2035 652,2040 665,2046 674,2040 683,2050 700,2044 715,2050 748,2048 752,2037 758,2039 764,2045 780,2043 797,2046 808,2046 812,2025 816,2033 820,2031 823,2049 855,2050 863,2035 870,2025 873,2033 876,2014 884,2026 888,2040 896,2041 902,2014 906,1988 910,2000 912,1966 917,1992 920,2002 923,2037 930,2048 941,2047 945,2028 950,2042 957,2048 980,2048 990,2042 1010,2043 1042,2045 1048,2016 1054,2014 1058,1996 1063,2013 1066,2030`});
add("volumeLines", "polyline", {class: "line", stroke: "#e07e50", points: `13,2049 50,2048 55,2043 71,2044 83,2045 88,2030 97,2026 104,2021 108,2024 114,1998 119,1988 126,1995 132,2018 139,2040 149,2043 154,2030 170,2025 180,2024 186,2022 190,2007 194,2017 197,2006 204,2008 209,2020 214,2024 220,2041 230,2044 241,2032 252,2024 263,2035 275,2043 300,2047 325,2043 345,2047 375,2049 400,2047 420,2050 447,2050 454,2043 462,2045 469,2034 475,2040 482,2034 490,2044 500,2040 510,2041 520,2027 527,2033 532,2028 534,2003 537,2011 543,2011 545,2013 548,1984 552,1984 555,2010 565,2015 568,2045 600,2044 630,2041 640,2037 651,2035 660,2043 680,2043 710,2050 745,2050 754,2042 780,2045 808,2045 813,2038 829,2040 835,2048 855,2050 863,2040 870,2030 878,2023 890,2029 896,2038 902,2025 906,2014 909,2013 914,1990 920,1997 929,2022 933,2045 940,2048 948,2043 970,2047 985,2048 1003,2043 1020,2044 1040,2047 1047,2037 1052,2022 1057,2014 1067,2012`});
```
